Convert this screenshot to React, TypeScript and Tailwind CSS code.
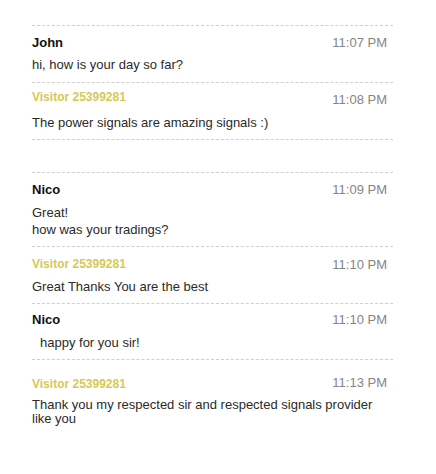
type Msg = {
  name: string;
  visitor?: boolean;
  time: string;
  lines: string[];
  pt: string;
  timePt: string;
  msgMt: string;
  pb: string;
  leading: string;
  indent?: boolean;
};

const first: Msg[] = [
  { name: 'John', time: '11:07 PM', lines: ['hi, how is your day so far?'], pt: 'pt-[9px]', timePt: 'pt-[9px]', msgMt: 'mt-[7px]', pb: 'pb-[10px]', leading: 'leading-[15px]' },
  { name: 'Visitor 25399281', visitor: true, time: '11:08 PM', lines: ['The power signals are amazing signals :)'], pt: 'pt-[7px]', timePt: 'pt-[9px]', msgMt: 'mt-[8px]', pb: 'pb-[9px]', leading: 'leading-[15px]' },
];

const second: Msg[] = [
  { name: 'Nico', time: '11:09 PM', lines: ['Great!', 'how was your tradings?'], pt: 'pt-[9px]', timePt: 'pt-[9px]', msgMt: 'mt-[7px]', pb: 'pb-[8px]', leading: 'leading-[17px]' },
  { name: 'Visitor 25399281', visitor: true, time: '11:10 PM', lines: ['Great Thanks You are the best'], pt: 'pt-[10px]', timePt: 'pt-[10px]', msgMt: 'mt-[7px]', pb: 'pb-[9px]', leading: 'leading-[15px]' },
  { name: 'Nico', time: '11:10 PM', lines: ['happy for you sir!'], pt: 'pt-[8px]', timePt: 'pt-[8px]', msgMt: 'mt-[8px]', pb: 'pb-[9px]', leading: 'leading-[15px]', indent: true },
  { name: 'Visitor 25399281', visitor: true, time: '11:13 PM', lines: ['Thank you my respected sir and respected signals provider like you'], pt: 'pt-[17px]', timePt: 'pt-[15px]', msgMt: 'mt-[6px]', pb: 'pb-[9px]', leading: 'leading-[14px]' },
];

const Row = ({ m }: { m: Msg }) => (
  <div className={`border-t border-dashed border-[#cfcfcf] ${m.pb}`}>
    <div className="flex items-start justify-between">
      <div
        className={`${m.pt} font-bold leading-[15px] ${
          m.visitor ? 'text-[12px] text-[#d5c956]' : 'text-[13px] text-[#111]'
        }`}
      >
        {m.name}
      </div>
      <div className={`${m.timePt} pr-[6px] text-[13px] leading-[15px] text-[#858585]`}>{m.time}</div>
    </div>
    <div className={`${m.msgMt} ${m.leading} pr-[6px] text-[13px] text-[#2a2a2a] ${m.indent ? 'pl-[8px]' : ''}`}>
      {m.lines.map((l, i) => (
        <div key={i}>{l}</div>
      ))}
    </div>
  </div>
);

export default function App() {
  return (
    <div className="w-[436px] h-[474px] bg-white pt-[25px] font-['Liberation_Sans',Arial,sans-serif]">
      <div className="ml-[32px] w-[361px]">
        <div className="border-b border-dashed border-[#cfcfcf]">
          {first.map((m, i) => (
            <Row key={i} m={m} />
          ))}
        </div>
        <div className="mt-[32px]">
          {second.map((m, i) => (
            <Row key={i} m={m} />
          ))}
        </div>
      </div>
    </div>
  );
}
